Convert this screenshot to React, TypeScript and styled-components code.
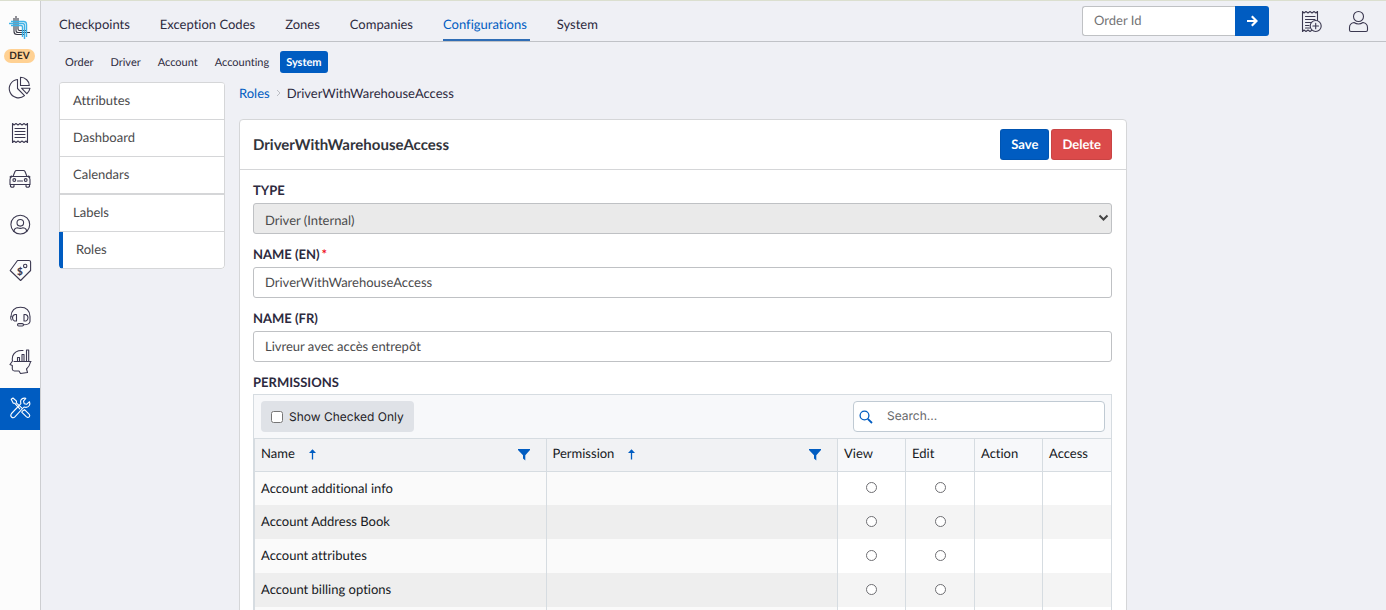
import React from "react";
import styled, { createGlobalStyle, css } from "styled-components";

const color = {
  page: "#eff0f5",
  rail: "#fcfcfc",
  blue: "#005cc1",
  red: "#db4a4a",
  ink: "#2d2a3e",
  text: "#4a4a4c",
  line: "#d5d6d8",
  grid: "#d6dce1",
  field: "#bfc1c4",
};

const GlobalStyle = createGlobalStyle`
  *, *::before, *::after { box-sizing: border-box; }
  body {
    margin: 0;
    background: ${color.page};
    color: ${color.ink};
    font: 13px/18px Lato, "Liberation Sans", sans-serif;
    font-variant-ligatures: no-common-ligatures;
    text-rendering: geometricPrecision;
  }
  button, input, select { font: inherit; color: inherit; margin: 0; text-rendering: inherit; }
  a { color: inherit; text-decoration: none; }
`;

const Page = styled.div`
  display: flex;
  height: 100vh;
  overflow: hidden;
  border-top: 1px solid #dbdfcf;
`;

/* ---------- left rail ---------- */

const Rail = styled.aside`
  flex: none;
  width: 41px;
  background: ${color.rail};
  border-right: 1px solid #cdced1;
  padding-top: 14px;
`;

const LogoLink = styled.a`
  display: flex;
  justify-content: center;
  height: 24px;
`;

const EnvBadge = styled.div`
  width: 31px;
  height: 14px;
  margin: 10px auto 3px 4px;
  border-radius: 7px;
  background: #ffd193;
  color: #33291f;
  font-size: 10px;
  font-weight: 700;
  line-height: 14px;
  text-align: center;
`;

const RailNav = styled.nav`
  display: flex;
  flex-direction: column;
  gap: 4px;
`;

const RailLink = styled.a<{ $active?: boolean }>`
  display: flex;
  align-items: center;
  justify-content: center;
  height: 42px;
  color: ${(p) => (p.$active ? "#fff" : "#3b3850")};
  background: ${(p) => (p.$active ? color.blue : "transparent")};
`;

const LineSvg = styled.svg`
  display: block;
  width: 24px;
  height: 24px;
  overflow: visible;
  fill: none;
  stroke: currentColor;
  stroke-width: 1.1;
  stroke-linejoin: round;
  stroke-linecap: round;
`;

const Dollar = styled.text`
  fill: currentColor;
  stroke: none;
  font: 900 10px Lato, sans-serif;
`;

const Icon = ({ children }: { children: React.ReactNode }) => (
  <LineSvg viewBox="0 0 24 24" aria-hidden="true">
    {children}
  </LineSvg>
);

const Logo = () => (
  <svg width="24" height="24" viewBox="0 0 24 24" fill="none" strokeWidth="1.1" aria-hidden="true">
    <g stroke="#3a3a46">
      <path d="M6 3V16.500Q6 19.500 9 19.500H17" />
      <path d="M8 1V15.500Q8 17.500 10 17.500H22" />
      <path d="M10 3V14Q10 15.500 11.500 15.500H19" />
    </g>
    <g stroke="#3fb2e6" strokeWidth="1.400">
      <path d="M3 10.500H13Q14.500 10.500 14.500 12V22" />
      <path d="M1 8.500H14.500Q16.500 8.500 16.500 10.500V24" />
      <path d="M3 6.500H15.500Q18.500 6.500 18.500 9.500V22" />
    </g>
  </svg>
);

const PieIcon = () => (
  <Icon>
    <path d="M9.500 4.500A9.200 9.200 0 1 0 16.500 20.600L9.500 13.500Z" />
    <path d="M12.500 2.300V10.500H21.300A9 8.300 0 0 0 12.500 2.300Z" />
    <path d="M13.500 13.200H22A9 9 0 0 1 18.800 18.700Z" />
  </Icon>
);

const ReceiptIcon = () => (
  <Icon>
    <path d="M4.500 2.500L6 4L8 2.500L10 4L12 2.500L14 4L16 2.500L18 4L19.500 2.500V21.500L18 20L16 21.500L14 20L12 21.500L10 20L8 21.500L6 20L4.500 21.500Z" />
    <path d="M7 7.500H17M7 10.500H17M7 13.500H17M7 16.500H17" />
  </Icon>
);

const CarIcon = () => (
  <Icon>
    <path d="M5 9.500L7 4.500Q7.500 3.500 8.500 3.500H15.500Q16.500 3.500 17 4.500L19 9.500M4 9.500H20Q22 10.500 22 12.500V17.500H2V12.500Q2 10.500 4 9.500ZM2 10L3.500 9M22 10L20.500 9" />
    <circle cx="6.300" cy="13" r="1.400" />
    <circle cx="17.700" cy="13" r="1.400" />
    <path d="M9.500 14H14.500M2.500 17.500V19.500Q4.500 21 6 19.500V17.500M18 17.500V19.500Q19.500 21 21.500 19.500V17.500" />
  </Icon>
);

const UserCircleIcon = () => (
  <Icon>
    <circle cx="12.300" cy="11.600" r="9.400" />
    <circle cx="12.300" cy="9.800" r="3.300" />
    <path d="M6 18.500C6 16 7.500 15 9.500 14.800Q12.300 16 15 14.800C17 15 18.600 16 18.600 18.500" />
  </Icon>
);

const TagIcon = () => (
  <Icon>
    <path d="M9.500 1.500H21Q22.600 1.500 22.600 3V11.500L12.600 21.500L2.200 11.500Z" />
    <circle cx="17.200" cy="7" r="1.700" />
    <Dollar x="9" y="15.500">$</Dollar>
  </Icon>
);

const HeadsetIcon = () => (
  <Icon>
    <path d="M3 11.500Q3.500 2.300 12.500 2.300T22 11.500V16.500Q21.500 19.800 15.500 19.800" />
    <path d="M7 9.500H8.500V16H6.500Q4.500 15.500 4.500 12.800T7 9.500ZM17.500 9.500H16V16H18Q20 15.500 20 12.800T17.500 9.500Z" />
    <rect x="9.500" y="18.600" width="6" height="2.400" rx="1.200" />
    <path d="M3 11.500Q2 13.500 3.300 15" />
  </Icon>
);

const InsightIcon = () => (
  <Icon>
    <path d="M15 -0.500Q7 -1 4.700 5Q4 8 4.500 10L2 13.500L4.300 14.500V18Q4.500 20 6.500 20H11L12.500 22.500L19.500 21.500L18.500 18Q21.500 15.500 22.500 11" />
    <path d="M6 10.500H23M9.500 10V6.500H11.500V10M14 10V3.500H16V10M18.500 10V-1H20.700V10" />
  </Icon>
);

const ToolsIcon = () => (
  <Icon>
    <path d="M3.200 2.200L5 1L8.500 4.200L8.300 5.800L14 11.200M5.300 6.300L3.200 2.200M5.300 6.300L6.800 6.300L11.800 11.800" />
    <path d="M14.300 14.200L16.500 12.600L21.300 17.300Q22.300 18.600 21.200 19.800Q20 21 18.500 19.900L13.700 15.200Z" />
    <path d="M17.800 1.400Q14.500 0.500 12.900 3Q12.300 4.700 12.900 6.600L3.500 16.500Q2 18.500 3.500 20Q5.200 21.500 6.900 19.900L16 10Q19.500 11.200 21.300 8.500Q22.300 6.600 21.500 4.700L18.600 7.300L16.200 6.700L15.500 4.200Z" />
  </Icon>
);

const ReceiptPlusIcon = () => (
  <Icon>
    <path d="M12.500 20.500L11 21.500L9 20L7 21.500L5 20L3.500 21.500V1.500L5 3L7 1.500L9 3L11 1.500L13 3L15 1.500L17 3L18.500 1.500V10.500" />
    <path d="M6.500 6.500H16M6.500 9.500H16M6.500 12.500H11.500M6.500 15.500H10M6.500 18H10.500" />
    <circle cx="16.700" cy="16" r="5.500" />
    <path d="M16.700 13.200V18.800M13.900 16H19.500" />
  </Icon>
);

const UserIcon = () => (
  <Icon>
    <circle cx="11.500" cy="6.500" r="5" />
    <path d="M7 12.500Q2.500 13.500 2.500 17.500V20Q2.500 21.500 4 21.500H19Q20.500 21.500 20.500 20V17.500Q20.500 13.500 16 12.500Q11.500 15.500 7 12.500Z" />
  </Icon>
);

/* ---------- top navigation ---------- */

const Main = styled.div`
  flex: 1;
  min-width: 0;
  padding-left: 18px;
`;

const TopBar = styled.header`
  display: flex;
  justify-content: space-between;
  height: 41px;
  border-bottom: 1px solid #c0c2c7;
`;

const Tabs = styled.nav`
  display: flex;
  gap: 27px;
`;

const Tab = styled.a<{ $active?: boolean }>`
  display: flex;
  align-items: center;
  height: 40px;
  padding: 8px 3px 0 0;
  border-bottom: 2px solid transparent;
  ${(p) =>
    p.$active &&
    css`
      color: ${color.blue};
      border-bottom-color: #2f6db5;
    `}
`;

const Tools = styled.div`
  display: flex;
  align-items: flex-start;
  padding: 5px 15px 0 0;
`;

const OrderSearch = styled.form`
  display: flex;
  height: 30px;
  margin-right: 30px;
`;

const OrderInput = styled.input`
  width: 153px;
  padding: 0 11px 2px;
  border: 1px solid ${color.field};
  border-right: 0;
  border-radius: 3px 0 0 3px;
  background: #fff;
  outline: none;
  &::placeholder { color: #737375; opacity: 1; }
`;

const OrderButton = styled.button`
  display: flex;
  align-items: center;
  justify-content: center;
  width: 34px;
  padding: 0;
  border: 0;
  border-radius: 0 3px 3px 0;
  background: ${color.blue};
  color: #fff;
`;

const ToolButton = styled.button`
  margin: 4px 0 0;
  padding: 0;
  border: 0;
  background: none;
  color: #3b3850;
  & + & { margin-left: 24px; }
`;

const SubNav = styled.nav`
  display: flex;
  gap: 5px;
  margin-top: 9px;
`;

const SubLink = styled.a<{ $active?: boolean }>`
  padding: 2px 6px 0;
  border-radius: 3px;
  font-size: 11px;
  line-height: 20px;
  ${(p) =>
    p.$active &&
    css`
      background: ${color.blue};
      color: #fff;
      font-weight: 700;
    `}
`;

/* ---------- body ---------- */

const Body = styled.div`
  display: flex;
  align-items: flex-start;
  gap: 14px;
  padding: 9px 14px 0 0;
`;

const SideList = styled.nav`
  flex: none;
  width: 166px;
  border-top: 1px solid ${color.line};
  border-radius: 4px;
  background: #fff;
  overflow: hidden;
`;

const SideLink = styled.a<{ $active?: boolean; $endsGroup?: boolean }>`
  display: block;
  padding: 0 0 2px 13px;
  border: 1px solid ${color.line};
  border-width: 0 1px ${(p) => (p.$endsGroup ? 2 : 1)}px;
  color: ${color.text};
  line-height: 34px;
  &:last-child { border-radius: 0 0 4px 4px; }
  ${(p) => p.$active && `border-left: 4px solid ${color.blue};`}
`;

const Content = styled.main`
  flex: 0 1 888px;
  min-width: 0;
`;

const Crumbs = styled.nav`
  display: flex;
  align-items: center;
  gap: 6px;
  height: 18px;
  margin: 2px 0 17px;
`;

const CrumbLink = styled.a`
  color: ${color.blue};
`;

const Card = styled.section`
  border: 1px solid ${color.line};
  border-radius: 4px;
  background: #fff;
`;

const CardHeader = styled.header`
  display: flex;
  align-items: center;
  gap: 2px;
  height: 50px;
  padding: 0 14px 0 13px;
  border-bottom: 1px solid ${color.line};
`;

const CardTitle = styled.h1`
  flex: 1;
  margin: 0;
  color: #32343b;
  font-size: 15px;
  font-weight: 700;
`;

const Action = styled.button<{ $tone: string }>`
  height: 31px;
  padding: 0 10px 1px;
  border: 1px solid rgba(0, 0, 0, 0.08);
  border-radius: 3px;
  background: ${(p) => p.$tone};
  color: #fff;
  font-weight: 700;
`;

const Form = styled.div`
  padding: 11px 14px 0 13px;
`;

const Field = styled.div`
  position: relative;
  margin-bottom: 11px;
`;

const Label = styled.label`
  display: block;
  margin-bottom: 4px;
  font-weight: 700;
`;

const Required = styled.span`
  margin-left: 2px;
  color: #f00f1e;
`;

const controlBox = css`
  display: block;
  width: 100%;
  height: 31px;
  border: 1px solid ${color.field};
  border-radius: 3px;
  color: ${color.text};
  outline: none;
`;

const TextInput = styled.input`
  ${controlBox}
  padding: 0 11px 2px;
  background: #fff;
`;

const TypeSelect = styled.select`
  ${controlBox}
  appearance: none;
  padding: 2px 11px 0;
  background: #eaeaea;
  opacity: 1;
`;

const Chevron = styled.svg`
  position: absolute;
  right: 3px;
  bottom: 12px;
  pointer-events: none;
`;

const GridLabel = styled.div`
  margin-bottom: 3px;
  font-weight: 700;
`;

/* ---------- permissions grid ---------- */

const GridBox = styled.div`
  border: 1px solid ${color.grid};
  border-bottom: 0;
  background: #f7f8fa;
`;

const GridBar = styled.div`
  display: flex;
  justify-content: space-between;
  align-items: center;
  height: 43px;
  padding: 0 6px 0 7px;
  font-family: Inter, "Liberation Sans", sans-serif;
  font-size: 12px;
`;

const CheckedOnly = styled.label`
  display: flex;
  align-items: center;
  gap: 6px;
  height: 31px;
  padding: 0 10px;
  border-radius: 4px;
  background: #dfe2e7;
  color: #1f2328;
`;

const CheckBox = styled.input`
  width: 12px;
  height: 12px;
`;

const SearchBox = styled.label`
  display: flex;
  align-items: center;
  gap: 14px;
  width: 252px;
  height: 31px;
  padding: 0 5px;
  border: 1px solid #c0cad3;
  border-radius: 4px;
  background: #fff;
`;

const SearchInput = styled.input`
  flex: 1;
  min-width: 0;
  padding: 0 0 2px;
  border: 0;
  background: none;
  outline: none;
  &::placeholder { color: #68696b; opacity: 1; }
`;

const Table = styled.table`
  width: 100%;
  table-layout: fixed;
  border-spacing: 0;
  color: #16191d;
`;

const Col = styled.col<{ $width?: number }>`
  ${(p) => p.$width && `width: ${p.$width}px;`}
`;

const Th = styled.th<{ $locked?: boolean }>`
  height: 33px;
  padding: 0 14px 4px 6px;
  border: 1px solid ${color.grid};
  border-width: 1px 0 0 1px;
  background: ${(p) => (p.$locked ? "#f1f2f4" : "#f7f8fa")};
  font-weight: 400;
  text-align: left;
`;

const ThInner = styled.div`
  display: flex;
  align-items: center;
  gap: 10px;
  & > svg { margin-top: 2px; }
  & > :last-child { margin-left: auto; }
`;

const Row = styled.tr`
  background: #fff;
  &:nth-child(even) { background: #f4f4f4; }
  &:first-child > td { border-top: 1px solid ${color.grid}; }
`;

const Td = styled.td<{ $locked?: boolean; $center?: boolean }>`
  height: 34px;
  padding: 0 6px 2px;
  border-left: 1px solid ${color.grid};
  ${(p) => p.$center && "text-align: center;"}
  ${(p) =>
    p.$locked &&
    css`
      background: #fafafa;
      ${Row}:nth-child(even) > & { background: #eeeeee; }
    `}
`;

const Radio = styled.input`
  appearance: none;
  display: block;
  width: 11px;
  height: 11px;
  margin: 0 auto;
  border: 1px solid #6f6f73;
  border-radius: 50%;
  background: #fff;
`;

const SortIcon = () => (
  <svg width="16" height="16" viewBox="0 0 16 16" fill="none" stroke={color.blue} aria-label="Sorted ascending">
    <path d="M7.500 13.500V4" strokeWidth="1.300" />
    <path d="M4 7L7.500 3.200L11 7Z" fill={color.blue} stroke="none" />
  </svg>
);

const FilterIcon = () => (
  <svg width="16" height="16" viewBox="0 0 16 16" fill={color.blue} aria-label="Filter">
    <path d="M2 3H14V4L9.300 9.200V14.500L7 12.500V9.200L2 4Z" />
  </svg>
);

const railItems = [
  { name: "Dashboard", icon: <PieIcon /> },
  { name: "Orders", icon: <ReceiptIcon /> },
  { name: "Drivers", icon: <CarIcon /> },
  { name: "Accounts", icon: <UserCircleIcon /> },
  { name: "Pricing", icon: <TagIcon /> },
  { name: "Support", icon: <HeadsetIcon /> },
  { name: "Insights", icon: <InsightIcon /> },
  { name: "Settings", icon: <ToolsIcon />, active: true },
];

const tabs = ["Checkpoints", "Exception Codes", "Zones", "Companies", "Configurations", "System"];
const subTabs = ["Order", "Driver", "Account", "Accounting", "System"];
const sections = ["Attributes", "Dashboard", "Calendars", "Labels", "Roles"];
const permissions = [
  "Account additional info",
  "Account Address Book",
  "Account attributes",
  "Account billing options",
];

export default function App() {
  return (
    <>
      <GlobalStyle />
      <Page>
        <Rail>
          <LogoLink href="#" aria-label="Home">
            <Logo />
          </LogoLink>
          <EnvBadge>DEV</EnvBadge>
          <RailNav>
            {railItems.map((item) => (
              <RailLink key={item.name} href="#" aria-label={item.name} $active={item.active}>
                {item.icon}
              </RailLink>
            ))}
          </RailNav>
        </Rail>

        <Main>
          <TopBar>
            <Tabs>
              {tabs.map((tab) => (
                <Tab key={tab} href="#" $active={tab === "Configurations"}>
                  {tab}
                </Tab>
              ))}
            </Tabs>
            <Tools>
              <OrderSearch onSubmit={(e) => e.preventDefault()}>
                <OrderInput placeholder="Order Id" aria-label="Order Id" />
                <OrderButton aria-label="Go">
                  <svg width="12" height="12" viewBox="0 0 12 12" fill="none" stroke="currentColor" strokeWidth="2.200">
                    <path d="M1 6H10M5.800 1.300L10.500 6L5.800 10.700" />
                  </svg>
                </OrderButton>
              </OrderSearch>
              <ToolButton aria-label="New order">
                <ReceiptPlusIcon />
              </ToolButton>
              <ToolButton aria-label="Profile">
                <UserIcon />
              </ToolButton>
            </Tools>
          </TopBar>

          <SubNav>
            {subTabs.map((tab) => (
              <SubLink key={tab} href="#" $active={tab === "System"}>
                {tab}
              </SubLink>
            ))}
          </SubNav>

          <Body>
            <SideList>
              {sections.map((name) => (
                <SideLink key={name} href="#" $active={name === "Roles"} $endsGroup={name === "Calendars"}>
                  {name}
                </SideLink>
              ))}
            </SideList>

            <Content>
              <Crumbs>
                <CrumbLink href="#">Roles</CrumbLink>
                <svg width="5" height="8" viewBox="0 0 5 8" fill="none" stroke="#bcbec4" aria-hidden="true">
                  <path d="M1 1L4 4L1 7" />
                </svg>
                <span>DriverWithWarehouseAccess</span>
              </Crumbs>

              <Card>
                <CardHeader>
                  <CardTitle>DriverWithWarehouseAccess</CardTitle>
                  <Action $tone={color.blue}>Save</Action>
                  <Action $tone={color.red}>Delete</Action>
                </CardHeader>

                <Form>
                  <Field>
                    <Label htmlFor="type">TYPE</Label>
                    <TypeSelect id="type" disabled>
                      <option>Driver (Internal)</option>
                    </TypeSelect>
                    <Chevron width="11" height="8" viewBox="0 0 11 8" fill="none" stroke="#444" strokeWidth="2">
                      <path d="M1.500 1.500L5.500 5.500L9.500 1.500" />
                    </Chevron>
                  </Field>
                  <Field>
                    <Label htmlFor="name-en">
                      NAME (EN)<Required>*</Required>
                    </Label>
                    <TextInput id="name-en" defaultValue="DriverWithWarehouseAccess" />
                  </Field>
                  <Field>
                    <Label htmlFor="name-fr">NAME (FR)</Label>
                    <TextInput id="name-fr" defaultValue="Livreur avec accès entrepôt" />
                  </Field>

                  <GridLabel>PERMISSIONS</GridLabel>
                  <GridBox>
                    <GridBar>
                      <CheckedOnly>
                        <CheckBox type="checkbox" />
                        Show Checked Only
                      </CheckedOnly>
                      <SearchBox>
                        <svg width="14" height="14" viewBox="0 0 14 14" fill="none" stroke={color.blue} aria-hidden="true">
                          <circle cx="5.500" cy="5.500" r="4.400" strokeWidth="1.300" />
                          <path d="M8.800 8.800L13 13" strokeWidth="1.800" />
                        </svg>
                        <SearchInput placeholder="Search..." aria-label="Search" />
                      </SearchBox>
                    </GridBar>
                    <Table>
                      <colgroup>
                        <Col />
                        <Col />
                        <Col $width={68} />
                        <Col $width={69} />
                        <Col $width={68} />
                        <Col $width={69} />
                      </colgroup>
                      <thead>
                        <tr>
                          <Th $locked>
                            <ThInner>
                              Name <SortIcon />
                              <FilterIcon />
                            </ThInner>
                          </Th>
                          <Th $locked>
                            <ThInner>
                              Permission <SortIcon />
                              <FilterIcon />
                            </ThInner>
                          </Th>
                          <Th>View</Th>
                          <Th>Edit</Th>
                          <Th>Action</Th>
                          <Th>Access</Th>
                        </tr>
                      </thead>
                      <tbody>
                        {permissions.map((name) => (
                          <Row key={name}>
                            <Td $locked>{name}</Td>
                            <Td $locked />
                            <Td $center>
                              <Radio type="radio" name={name} aria-label={`${name}: view`} />
                            </Td>
                            <Td $center>
                              <Radio type="radio" name={name} aria-label={`${name}: edit`} />
                            </Td>
                            <Td />
                            <Td />
                          </Row>
                        ))}
                        <Row aria-hidden="true">
                          <Td $locked />
                          <Td $locked />
                          <Td />
                          <Td />
                          <Td />
                          <Td />
                        </Row>
                      </tbody>
                    </Table>
                  </GridBox>
                </Form>
              </Card>
            </Content>
          </Body>
        </Main>
      </Page>
    </>
  );
}
